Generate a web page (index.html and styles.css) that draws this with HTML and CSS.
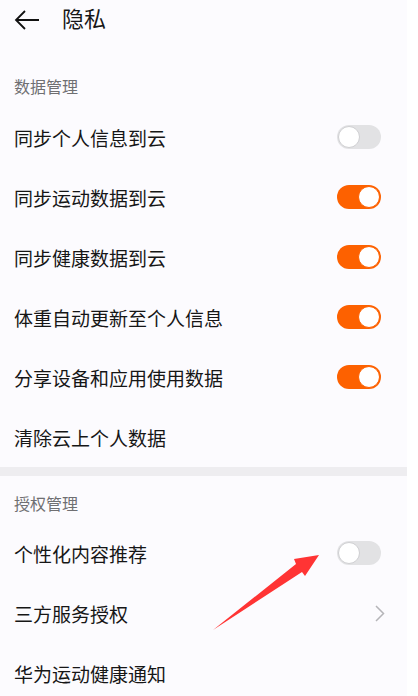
FILE: index.html
```html
<!DOCTYPE html>
<html lang="zh-CN">
<head>
    <meta charset="UTF-8">
    <meta name="viewport" content="width=device-width, initial-scale=1.0">
    <title>隐私</title>
    <link rel="stylesheet" href="styles.css">
</head>
<body>
    <div class="app">
        <div class="topbar">
            <svg class="back" width="26" height="20" viewBox="0 0 26 20">
                <path d="M25 10H2M11 1L2 10l9 9" fill="none" stroke="#111" stroke-width="1.8"/>
            </svg>
            <h1>隐私</h1>
        </div>

        <div class="section-title first">数据管理</div>
        <div class="row">
            <span>同步个人信息到云</span>
            <span class="switch"></span>
        </div>
        <div class="row">
            <span>同步运动数据到云</span>
            <span class="switch on"></span>
        </div>
        <div class="row">
            <span>同步健康数据到云</span>
            <span class="switch on"></span>
        </div>
        <div class="row">
            <span>体重自动更新至个人信息</span>
            <span class="switch on"></span>
        </div>
        <div class="row">
            <span>分享设备和应用使用数据</span>
            <span class="switch on"></span>
        </div>
        <div class="row">
            <span>清除云上个人数据</span>
        </div>

        <div class="divider"></div>

        <div class="section-title">授权管理</div>
        <div class="row">
            <span>个性化内容推荐</span>
            <span class="switch"></span>
        </div>
        <div class="row">
            <span>三方服务授权</span>
            <svg class="chevron" width="10" height="17" viewBox="0 0 10 17">
                <path d="M1 1l7.5 7.5L1 16" fill="none" stroke="#b5b5b8" stroke-width="1.5"/>
            </svg>
        </div>
        <div class="row">
            <span>华为运动健康通知</span>
        </div>

        <!-- 标注箭头 -->
        <svg class="pointer" width="418" height="696" viewBox="0 0 418 696">
            <path d="M213 630L296 564L294 559L319 555L305 576L302 572Z" fill="#ff3434"/>
        </svg>
    </div>
</body>
</html>
```

FILE: styles.css
```css
body {
    margin: 0;
    background: #ffffff;
    font-family: "Noto Sans CJK SC", "Noto Sans", sans-serif;
}
.app {
    position: relative;
    width: 407px;
    height: 696px;
    overflow: hidden;
    background: #fcfbfe;
    color: #161616;
}
.topbar {
    display: flex;
    align-items: center;
    height: 38px;
    padding-left: 14px;
}
.topbar .back {
    margin-right: 22px;
    margin-top: 2px;
}
.topbar h1 {
    margin: 0;
    font-size: 22px;
    font-weight: 400;
    line-height: 30px;
    margin-top: -5px;
}
.section-title {
    padding: 16px 14px 10px;
    font-size: 16px;
    line-height: 22px;
    color: #6f6f72;
}
.section-title.first {
    padding-top: 37px;
    padding-bottom: 11px;
}
.row {
    display: flex;
    align-items: center;
    justify-content: space-between;
    height: 60px;
    padding: 0 26px 2px 14px;
    box-sizing: border-box;
    font-size: 19px;
}
.switch {
    position: relative;
    width: 44px;
    height: 24px;
    border-radius: 12px;
    background: #e2e2e4;
    box-sizing: border-box;
}
.switch::after {
    content: "";
    position: absolute;
    top: 1px;
    left: 1px;
    width: 22px;
    height: 22px;
    border-radius: 50%;
    background: #ffffff;
    box-sizing: border-box;
    border: 1.5px solid #cfcfd2;
}
.switch.on {
    background: #fd6100;
}
.switch.on::after {
    left: 21px;
    border-color: #fd6100;
}
.chevron {
    margin-right: -4px;
}
.divider {
    height: 9px;
    margin-top: -1px;
    background: #eeedf0;
}
.pointer {
    position: absolute;
    top: 0;
    left: 0;
}
```
